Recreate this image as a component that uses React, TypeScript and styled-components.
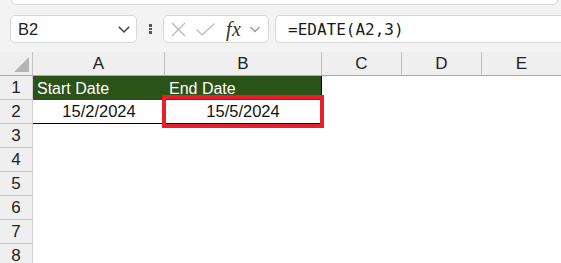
import React from 'react';
import styled, { createGlobalStyle, css } from 'styled-components';

const GlobalStyle = createGlobalStyle`
  html, body {
    margin: 0;
    padding: 0;
    background: #ffffff;
    font-family: "Liberation Sans", Arial, sans-serif;
  }
`;

const Screen = styled.div`
  width: 561px;
  height: 263px;
  overflow: hidden;
  background: #ffffff;
`;

const Ribbon = styled.div`
  background: #f3f3f3;
  height: 52px;
  display: flex;
  flex-direction: column;
`;

const RibbonEdge = styled.div`
  height: 4px;
  margin: 0 3px 0 11px;
  background: #ffffff;
  border: 1px solid #d9d9d9;
  border-top: none;
  border-radius: 0 0 7px 7px;
`;

const FormulaRow = styled.div`
  display: flex;
  align-items: center;
  padding: 10px 0 0 10px;
`;

const Box = styled.div`
  height: 28px;
  box-sizing: border-box;
  background: #ffffff;
  border: 1px solid #d6d6d6;
  border-radius: 5px;
  display: flex;
  align-items: center;
`;

const NameBox = styled(Box)`
  width: 127px;
  padding: 0 5px 0 7px;
  justify-content: space-between;
  font-size: 16.5px;
  color: #222;
`;

const Grip = styled.div`
  width: 3px;
  margin: 0 11px 0 12px;
  display: flex;
  flex-direction: column;
  gap: 1px;
  span {
    width: 3px;
    height: 2.5px;
    background: #555;
  }
`;

const FnBox = styled(Box)`
  width: 106px;
  padding: 0 3px 0 6px;
  gap: 8px;
`;

const Fx = styled.span`
  font-family: "Liberation Serif", "Times New Roman", serif;
  font-style: italic;
  font-size: 20px;
  color: #333;
  margin-left: 2px;
  letter-spacing: 0.5px;
`;

const FormulaInput = styled(Box)`
  flex: 1;
  margin-left: 6px;
  border-right: none;
  border-radius: 5px 0 0 5px;
  padding-left: 12px;
  font-family: "DejaVu Sans Mono", "Liberation Mono", monospace;
  font-size: 16px;
  color: #1a1a1a;
`;

const Sheet = styled.div`
  display: grid;
  grid-template-columns: 33px 132px 157px 80px 80px 80px;
  grid-auto-rows: 24px;
`;

const headerBase = css`
  background: #efefef;
  box-sizing: border-box;
  display: flex;
  align-items: center;
  justify-content: center;
  font-size: 17px;
  color: #222;
`;

const Corner = styled.div`
  ${headerBase};
  position: relative;
  border-bottom: 1px solid #a9a9a9;
  border-right: 1px solid #c4c4c4;
  &::after {
    content: '';
    position: absolute;
    right: 3px;
    bottom: 3px;
    width: 0;
    height: 0;
    border-left: 15px solid transparent;
    border-bottom: 15px solid #b5b5b5;
  }
`;

const ColHead = styled.div`
  ${headerBase};
  border-bottom: 1px solid #a9a9a9;
  border-right: 1px solid #bdbdbd;
`;

const RowHead = styled.div`
  ${headerBase};
  border-bottom: 1px solid #c4c4c4;
  border-right: 1px solid #d0d0d0;
`;

const Cell = styled.div<{ $head?: boolean; $center?: boolean; $edge?: boolean; $line?: boolean }>`
  box-sizing: border-box;
  display: flex;
  align-items: center;
  font-size: 16.5px;
  color: #111;
  padding: 0 4px;
  justify-content: ${p => (p.$center ? 'center' : 'flex-start')};
  ${p =>
    p.$head &&
    css`
      background: #2b5219;
      color: #ffffff;
      font-size: 16px;
      padding-top: 2px;
    `}
  ${p => p.$edge && css`border-right: 1px solid #000;`}
  ${p => p.$line && css`border-bottom: 1px solid #000;`}
`;

const Selected = styled(Cell)`
  position: relative;
  &::after {
    content: '';
    position: absolute;
    top: -5px;
    left: -3px;
    right: -3px;
    bottom: -5px;
    border: 4px solid #e8202a;
    pointer-events: none;
  }
`;

const Chevron = ({ size = 12, color = '#444' }: { size?: number; color?: string }) => (
  <svg width={size} height={size} viewBox="0 0 12 12" fill="none">
    <path d="M1.5 4 L6 8.5 L10.5 4" stroke={color} strokeWidth="1.3" />
  </svg>
);

const Cross = () => (
  <svg width="17" height="17" viewBox="0 0 17 17" fill="none">
    <path d="M2 2 L15 15 M15 2 L2 15" stroke="#b8b8b8" strokeWidth="1.2" />
  </svg>
);

const Check = () => (
  <svg width="21" height="15" viewBox="0 0 21 15" fill="none">
    <path d="M1.5 7.5 L7 13 L19.5 1.5" stroke="#b8b8b8" strokeWidth="1.2" />
  </svg>
);

const columns = ['A', 'B', 'C', 'D', 'E'];
const emptyRows = [3, 4, 5, 6, 7, 8];

export default function App() {
  return (
    <Screen>
      <GlobalStyle />
      <Ribbon>
        <RibbonEdge />
        <FormulaRow>
          <NameBox>
            <span>B2</span>
            <Chevron size={14} />
          </NameBox>
          <Grip>
            <span />
            <span />
            <span />
          </Grip>
          <FnBox>
            <Cross />
            <Check />
            <Fx>fx</Fx>
            <Chevron size={12} color="#999" />
          </FnBox>
          <FormulaInput>=EDATE(A2,3)</FormulaInput>
        </FormulaRow>
      </Ribbon>
      <Sheet>
        <Corner />
        {columns.map(c => (
          <ColHead key={c}>{c}</ColHead>
        ))}

        <RowHead>1</RowHead>
        <Cell $head>Start Date</Cell>
        <Cell $head $edge>End Date</Cell>
        <Cell />
        <Cell />
        <Cell />

        <RowHead>2</RowHead>
        <Cell $center $line>15/2/2024</Cell>
        <Selected $center $line $edge>15/5/2024</Selected>
        <Cell />
        <Cell />
        <Cell />

        {emptyRows.map(r => (
          <React.Fragment key={r}>
            <RowHead>{r}</RowHead>
            <Cell />
            <Cell />
            <Cell />
            <Cell />
            <Cell />
          </React.Fragment>
        ))}
      </Sheet>
    </Screen>
  );
}
